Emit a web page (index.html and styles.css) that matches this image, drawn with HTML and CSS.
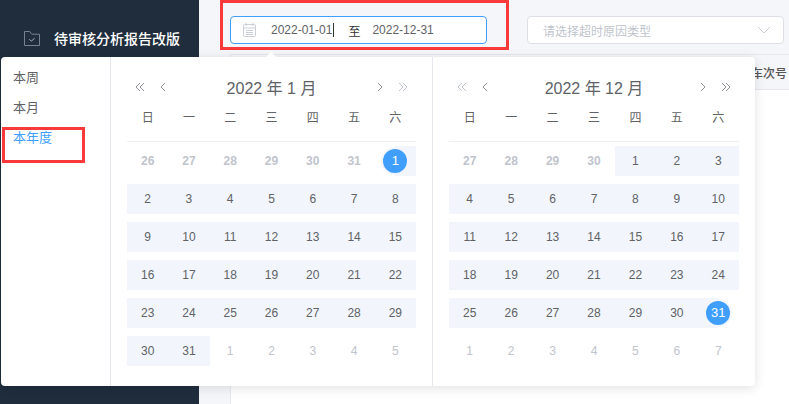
FILE: index.html
```html
<!DOCTYPE html>
<html lang="zh">
<head>
<meta charset="utf-8">
<title>日期范围</title>
<link rel="stylesheet" href="styles.css">
</head>
<body>
<div class="app">
  <aside class="side">
    <div class="menu-item">
      <svg class="folder" width="16" height="15" viewBox="0 0 16 15" fill="none" stroke="#76828f" stroke-width="1"><path d="M.5 14.5V.5h5.2l2 2.7h7.8v11.3z"/><path d="M5.3 8.2l2 2 3.4-3" stroke="#a9b2bd"/></svg>
      <span>待审核分析报告改版</span>
    </div>
  </aside>
  <main class="main">
    <div class="filters">
      <div class="range">
        <svg class="cal" width="13" height="14" viewBox="0 0 13 14" fill="none" stroke="#c9ced8"><rect x=".5" y="1.5" width="12" height="12" rx="1"/><path d="M.5 5h12M3 0v3M10 0v3M3 7.5h7M3 9.5h7M3 11.5h7" /></svg>
        <span class="date">2022-01-01</span><span class="caret"></span>
        <span class="to">至</span>
        <span class="date">2022-12-31</span>
      </div>
      <div class="select">
        <span>请选择超时原因类型</span>
        <svg width="14" height="8" viewBox="0 0 14 8" fill="none" stroke="#c9ced8"><path d="M1 1l6 6 6-6"/></svg>
      </div>
    </div>
    <div class="content">
      <div class="thead"><span>车次号</span></div>
    </div>
  </main>
</div>

<div class="mark mark-top"></div>
<div class="mark mark-side"></div>
<div class="arrow"></div>

<div class="picker">
  <ul class="shortcuts">
    <li>本周</li>
    <li>本月</li>
    <li class="on">本年度</li>
  </ul>
  <section class="panel">
    <header class="head">
      <span class="nav"><svg class="ic" viewBox="0 0 10 10"><path d="M5 1L1 5l4 4M9 1L5 5l4 4"/></svg><svg class="ic" viewBox="0 0 10 10"><path d="M7 1L3 5l4 4"/></svg></span>
      <span class="title">2022 年 1 月</span>
      <span class="nav"><svg class="ic" viewBox="0 0 10 10"><path d="M3 1l4 4-4 4"/></svg><svg class="ic faint" viewBox="0 0 10 10"><path d="M1 1l4 4-4 4M5 1l4 4-4 4"/></svg></span>
    </header>
    <div class="week"><span>日</span><span>一</span><span>二</span><span>三</span><span>四</span><span>五</span><span>六</span></div>
    <div class="days">
      <span class="off prev">26</span><span class="off prev">27</span><span class="off prev">28</span><span class="off prev">29</span><span class="off prev">30</span><span class="off prev">31</span><span class="start"><b>1</b></span>
      <span class="in">2</span><span class="in">3</span><span class="in">4</span><span class="in">5</span><span class="in">6</span><span class="in">7</span><span class="in">8</span>
      <span class="in">9</span><span class="in">10</span><span class="in">11</span><span class="in">12</span><span class="in">13</span><span class="in">14</span><span class="in">15</span>
      <span class="in">16</span><span class="in">17</span><span class="in">18</span><span class="in">19</span><span class="in">20</span><span class="in">21</span><span class="in">22</span>
      <span class="in">23</span><span class="in">24</span><span class="in">25</span><span class="in">26</span><span class="in">27</span><span class="in">28</span><span class="in">29</span>
      <span class="in">30</span><span class="in">31</span><span class="off">1</span><span class="off">2</span><span class="off">3</span><span class="off">4</span><span class="off">5</span>
    </div>
  </section>
  <section class="panel second">
    <header class="head">
      <span class="nav"><svg class="ic faint" viewBox="0 0 10 10"><path d="M5 1L1 5l4 4M9 1L5 5l4 4"/></svg><svg class="ic" viewBox="0 0 10 10"><path d="M7 1L3 5l4 4"/></svg></span>
      <span class="title">2022 年 12 月</span>
      <span class="nav"><svg class="ic" viewBox="0 0 10 10"><path d="M3 1l4 4-4 4"/></svg><svg class="ic" viewBox="0 0 10 10"><path d="M1 1l4 4-4 4M5 1l4 4-4 4"/></svg></span>
    </header>
    <div class="week"><span>日</span><span>一</span><span>二</span><span>三</span><span>四</span><span>五</span><span>六</span></div>
    <div class="days">
      <span class="off prev">27</span><span class="off prev">28</span><span class="off prev">29</span><span class="off prev">30</span><span class="in">1</span><span class="in">2</span><span class="in">3</span>
      <span class="in">4</span><span class="in">5</span><span class="in">6</span><span class="in">7</span><span class="in">8</span><span class="in">9</span><span class="in">10</span>
      <span class="in">11</span><span class="in">12</span><span class="in">13</span><span class="in">14</span><span class="in">15</span><span class="in">16</span><span class="in">17</span>
      <span class="in">18</span><span class="in">19</span><span class="in">20</span><span class="in">21</span><span class="in">22</span><span class="in">23</span><span class="in">24</span>
      <span class="in">25</span><span class="in">26</span><span class="in">27</span><span class="in">28</span><span class="in">29</span><span class="in">30</span><span class="end"><b>31</b></span>
      <span class="off">1</span><span class="off">2</span><span class="off">3</span><span class="off">4</span><span class="off">5</span><span class="off">6</span><span class="off">7</span>
    </div>
  </section>
</div>
</body>
</html>
```

FILE: styles.css
```css
* { box-sizing: border-box; }
html, body { margin: 0; height: 100%; overflow: hidden; }
body { font-family: "Liberation Sans", "Noto Sans CJK SC", sans-serif; font-size: 12px; color: #606266; background: #f5f6fa; }
.app { display: flex; height: 404px; }
.side { width: 199px; flex: none; background: #1f2d3d; padding-top: 30px; }
.menu-item { display: flex; align-items: center; gap: 14px; padding-left: 24px; color: #fff; font-size: 14px; font-weight: 500; height: 16px; }
.main { flex: 1; display: flex; flex-direction: column; padding-left: 32px; }
.filters { display: flex; gap: 40px; height: 55px; padding-top: 16px; border-bottom: 1px solid #e6e8ee; margin-left: -1px; }
.range { width: 257px; height: 28px; background: #fff; border: 1px solid #409eff; border-radius: 4px; display: flex; align-items: center; padding-left: 12px; position: relative; }
.cal { margin-right: 15px; }
.date { color: #606266; font-size: 12px; }
.caret { width: 1px; height: 14px; background: #333; margin-left: 1px; }
.to { color: #303133; margin: 0 12px 0 14px; }
.select { width: 257px; height: 28px; background: #fff; border: 1px solid #dcdfe6; border-radius: 4px; display: flex; align-items: center; justify-content: space-between; padding: 0 12px 0 15px; color: #c0c4cc; font-size: 12px; }
.content { flex: 1; background: #fff; border-left: 1px solid #e6e8ee; margin-left: -1px; }
.thead { height: 35px; background: #f5f6fa; border-bottom: 1px solid #e6e8ee; display: flex; justify-content: flex-end; align-items: center; padding-right: 2px; font-weight: 500; color: #555; font-size: 12px; }
.mark { position: absolute; border: 3px solid #f93a3a; pointer-events: none; z-index: 5; }
.mark-top { left: 220px; top: 0; width: 289px; height: 50px; }
.mark-side { left: 2px; top: 127px; width: 83px; height: 36px; z-index: 20; }
.arrow { position: absolute; left: 265px; top: 52px; width: 0; height: 0; border: 6px solid transparent; border-top: 0; border-bottom-color: #fff; z-index: 11; }
.picker { position: absolute; left: 1px; top: 57px; width: 754px; height: 329px; background: #fff; border-radius: 4px; display: flex; box-shadow: 0 2px 12px rgba(0,0,0,.12); z-index: 10; }
.shortcuts { list-style: none; margin: 0; padding: 7px 0 0 12px; width: 110px; flex: none; border-right: 1px solid #e4e7ed; font-size: 13px; color: #606266; }
.shortcuts li { height: 30px; line-height: 28px; }
.shortcuts .on { color: #409eff; }
.panel { width: 322px; flex: none; padding: 0 16px; border-right: 1px solid #e4e7ed; }
.second { border-right: 0; }
.head { height: 60px; display: flex; align-items: center; justify-content: space-between; padding: 0 8px 0 8px; }
.title { font-size: 16px; color: #606266; }
.nav { display: flex; gap: 13px; }
.ic { width: 10px; height: 10px; fill: none; stroke: #909399; stroke-width: 1; }
.ic.faint { stroke: #c0c4cc; }
.week { display: grid; grid-template-columns: repeat(7, 1fr); height: 31px; margin-top: -6px; border-bottom: 1px solid #ebeef5; margin-bottom: 4px; text-align: center; color: #606266; line-height: 14px; }
.days { display: grid; grid-template-columns: repeat(7, 1fr); grid-auto-rows: 30px; row-gap: 8px; text-align: center; line-height: 30px; }
.days span { display: block; }
.off { color: #c0c4cc; }
.prev { font-weight: 700; }
.in { background: #f2f6fc; }
.start { background: linear-gradient(to right, transparent 50%, #f2f6fc 50%); }
.end { background: linear-gradient(to left, transparent 50%, #f2f6fc 50%); }
.days b { display: block; width: 24px; height: 24px; line-height: 24px; margin: 3px auto; border-radius: 50%; background: #409eff; color: #fff; font-weight: 400; font-size: 13px; box-shadow: 0 0 0 2px #f2f6fc; }
```
